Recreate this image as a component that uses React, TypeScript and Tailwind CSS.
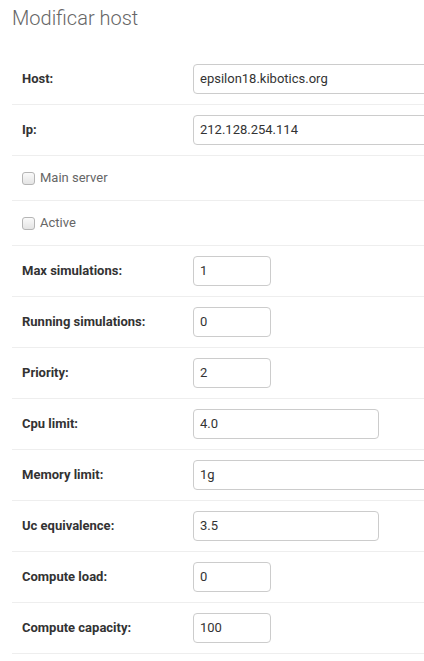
type Field = {
  label: string;
  kind: 'text' | 'check';
  value?: string;
  width?: string;
};

const fields: Field[] = [
  { label: 'Host:', kind: 'text', value: 'epsilon18.kibotics.org', width: 'w-[610px]' },
  { label: 'Ip:', kind: 'text', value: '212.128.254.114', width: 'w-[610px]' },
  { label: 'Main server', kind: 'check' },
  { label: 'Active', kind: 'check' },
  { label: 'Max simulations:', kind: 'text', value: '1', width: 'w-[78px]' },
  { label: 'Running simulations:', kind: 'text', value: '0', width: 'w-[78px]' },
  { label: 'Priority:', kind: 'text', value: '2', width: 'w-[78px]' },
  { label: 'Cpu limit:', kind: 'text', value: '4.0', width: 'w-[186px]' },
  { label: 'Memory limit:', kind: 'text', value: '1g', width: 'w-[610px]' },
  { label: 'Uc equivalence:', kind: 'text', value: '3.5', width: 'w-[186px]' },
  { label: 'Compute load:', kind: 'text', value: '0', width: 'w-[78px]' },
  { label: 'Compute capacity:', kind: 'text', value: '100', width: 'w-[78px]' },
];

function FormRow({ field }: { field: Field }) {
  if (field.kind === 'check') {
    return (
      <div className="flex items-center h-[45px] pl-[10px] border-b border-[#eee]">
        <span className="w-[13px] h-[13px] rounded-[3px] border border-[#b5b5b5] bg-gradient-to-b from-[#fafafa] to-[#e4e4e4] shrink-0" />
        <span className="ml-[5px] text-[13px] text-[#666]">{field.label}</span>
      </div>
    );
  }
  return (
    <div className="flex items-center h-[51px] pl-[10px] border-b border-[#eee]">
      <label className="w-[171px] shrink-0 text-[13px] font-bold text-[#333]">{field.label}</label>
      <div
        className={`${field.width} shrink-0 h-[30px] flex items-center px-[6px] border border-[#ccc] rounded-[4px] bg-white text-[13px] text-[#333]`}
      >
        {field.value}
      </div>
    </div>
  );
}

export default function App() {
  return (
    <div
      className="w-[424px] h-[661px] overflow-hidden bg-white"
      style={{ fontFamily: 'Roboto, "Liberation Sans", sans-serif' }}
    >
      <div className="pl-[12px]">
        <h1 className="h-[54px] pt-[6px] text-[20px] font-light text-[#666] leading-[24px]">Modificar host</h1>
        <div>
          {fields.map((f) => (
            <FormRow key={f.label} field={f} />
          ))}
        </div>
      </div>
    </div>
  );
}
